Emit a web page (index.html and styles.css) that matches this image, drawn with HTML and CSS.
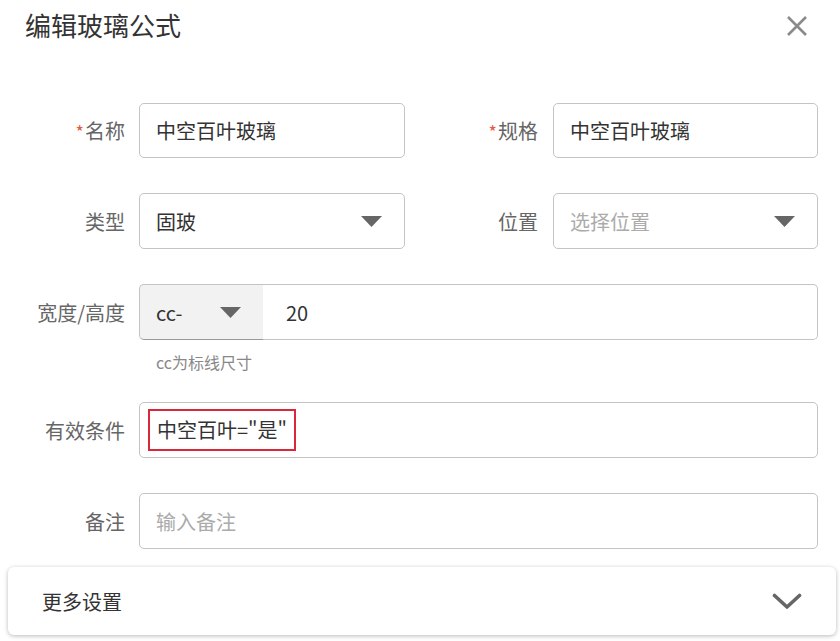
FILE: index.html
```html
<!DOCTYPE html>
<html lang="zh-CN">
<head>
<meta charset="utf-8">
<title>编辑玻璃公式</title>
<link rel="stylesheet" href="styles.css">
</head>
<body>
<div class="dialog">
  <header class="header">
    <h1 class="title">编辑玻璃公式</h1>
    <button class="close" type="button" aria-label="关闭">
      <svg width="22" height="22" viewBox="0 0 22 22"><path d="M2 2 L20 20 M20 2 L2 20" stroke="#8a8a8a" stroke-width="2.6" fill="none"/></svg>
    </button>
  </header>

  <div class="form">
    <div class="row row-first">
      <div class="label"><span class="req">*</span>名称</div>
      <div class="input input-short"><span class="value">中空百叶玻璃</span></div>
      <div class="label label-right"><span class="req">*</span>规格</div>
      <div class="input input-short"><span class="value">中空百叶玻璃</span></div>
    </div>

    <div class="row">
      <div class="label">类型</div>
      <div class="input select"><span class="value">固玻</span>
        <svg class="caret" width="21" height="11" viewBox="0 0 21 11"><path d="M0 0 H21 L10.5 11 Z" fill="#666"/></svg>
      </div>
      <div class="label label-right">位置</div>
      <div class="input select"><span class="placeholder">选择位置</span>
        <svg class="caret" width="21" height="11" viewBox="0 0 21 11"><path d="M0 0 H21 L10.5 11 Z" fill="#666"/></svg>
      </div>
    </div>

    <div class="row">
      <div class="label">宽度/高度</div>
      <div class="wide">
        <div class="combo">
          <div class="addon"><span class="value">cc-</span>
            <svg class="caret" width="21" height="11" viewBox="0 0 21 11"><path d="M0 0 H21 L10.5 11 Z" fill="#666"/></svg>
          </div>
          <div class="combo-input"><span class="value">20</span></div>
        </div>
        <div class="hint">cc为标线尺寸</div>
      </div>
    </div>

    <div class="row">
      <div class="label">有效条件</div>
      <div class="wide">
        <div class="input input-marked"><span class="mark">中空百叶="是"</span></div>
      </div>
    </div>

    <div class="row">
      <div class="label">备注</div>
      <div class="wide">
        <div class="input"><span class="placeholder">输入备注</span></div>
      </div>
    </div>
  </div>

  <div class="more">
    <span class="more-title">更多设置</span>
    <svg width="30" height="17" viewBox="0 0 30 17"><path d="M2.5 2.5 L15 14 L27.5 2.5" stroke="#666" stroke-width="3.6" fill="none" stroke-linecap="round" stroke-linejoin="round"/></svg>
  </div>
</div>
</body>
</html>
```

FILE: styles.css
```css
* { box-sizing: border-box; }

html, body {
  margin: 0;
  padding: 0;
  background: #ffffff;
}

body {
  font-family: "Noto Sans CJK SC", "Noto Sans", sans-serif;
  color: #333;
  width: 840px;
  height: 641px;
  overflow: hidden;
}

.dialog {
  padding: 0 4px 0 8px;
}

.header {
  height: 50px;
  display: flex;
  align-items: center;
  justify-content: space-between;
  padding: 0 28px 0 17px;
}

.title {
  margin: 0;
  font-size: 26px;
  font-weight: 400;
  line-height: 50px;
  color: #333;
}

.close {
  border: 0;
  background: none;
  padding: 0;
  width: 22px;
  height: 22px;
  margin-top: 2px;
  display: flex;
}

.form {
  margin-top: 53px;
  margin-bottom: 18px;
  display: flex;
  flex-direction: column;
  gap: 35px;
}

.row {
  display: grid;
  grid-template-columns: 131px 266px 148px 265px;
  align-items: start;
}

.label {
  height: 56px;
  display: flex;
  align-items: center;
  justify-content: flex-end;
  padding-right: 14px;
  font-size: 20px;
  color: #666;
}

.row-first .label {
  height: 55px;
}

.label-right {
  padding-right: 15px;
}

.req {
  color: #e8573f;
  font-size: 18px;
  margin-right: 1px;
}

.wide {
  grid-column: 2 / 5;
}

.input {
  height: 56px;
  border: 1px solid #c4c4c4;
  border-radius: 5px;
  background: #fff;
  display: flex;
  align-items: center;
  padding: 0 22px 0 16px;
  font-size: 20px;
}

.input-short {
  height: 55px;
}

.value {
  color: #333;
}

.placeholder {
  color: #ababab;
}

.select {
  justify-content: space-between;
}

.caret {
  display: block;
  flex: none;
}

.combo {
  display: flex;
  height: 56px;
  font-size: 20px;
}

.addon {
  width: 124px;
  background: #f2f2f2;
  border: 1px solid #c4c4c4;
  border-right: none;
  border-bottom-color: #9a9a9a;
  border-radius: 5px 0 0 5px;
  display: flex;
  align-items: center;
  justify-content: space-between;
  padding: 0 22px 0 16px;
}

.combo-input {
  flex: 1;
  border: 1px solid #c4c4c4;
  border-left: none;
  border-radius: 0 5px 5px 0;
  display: flex;
  align-items: center;
  padding-left: 23px;
}

.hint {
  height: 27px;
  padding: 11px 0 0 17px;
  font-size: 16px;
  line-height: 22px;
  color: #888;
  white-space: nowrap;
}

.input-marked {
  padding-left: 8px;
}

.mark {
  display: inline-block;
  border: 2px solid #d8283a;
  line-height: 38px;
  padding: 0 7px 0 7px;
  color: #333;
}

.more {
  height: 68px;
  border-radius: 6px;
  background: #fff;
  box-shadow: 0 1px 4px rgba(0, 0, 0, 0.28);
  display: flex;
  align-items: center;
  justify-content: space-between;
  padding: 0 34px 0 34px;
}

.more-title {
  font-size: 20px;
  color: #333;
}
```
